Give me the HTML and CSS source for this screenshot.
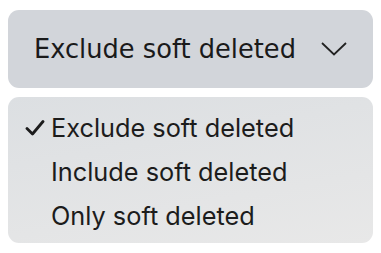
FILE: index.html
```html
<!DOCTYPE html>
<html lang="en">
<head>
    <meta charset="UTF-8">
    <title>Soft delete filter</title>
    <link rel="stylesheet" href="styles.css">
</head>
<body>
    <div class="select">
        <span class="select-label">Exclude soft deleted</span>
        <svg class="chevron" width="26" height="14" viewBox="0 0 26 14">
            <path d="M1 1 L13 12.5 L25 1" fill="none" stroke="#222" stroke-width="1.8"/>
        </svg>
    </div>
    <ul class="menu">
        <li class="menu-item">
            <svg class="check" width="20" height="16" viewBox="0 0 20 16">
                <path d="M2 8.5 L7.5 14 L18 1.5" fill="none" stroke="#1c1c1c" stroke-width="2.8" stroke-linecap="round" stroke-linejoin="round"/>
            </svg>
            Exclude soft deleted
        </li>
        <li class="menu-item"><span class="check"></span>Include soft deleted</li>
        <li class="menu-item"><span class="check"></span>Only soft deleted</li>
    </ul>
</body>
</html>
```

FILE: styles.css
```css
body {
    margin: 0;
    padding: 10px 8px 0 8px;
    background: #ffffff;
    width: 365px;
}

.select {
    display: flex;
    align-items: center;
    height: 78px;
    padding: 0 0 1px 26px;
    background: #d2d5da;
    border-radius: 11px;
    box-sizing: border-box;
    gap: 25px;
}

.select-label {
    font-family: "DejaVu Sans", sans-serif;
    font-size: 25.7px;
    color: #1a1a1a;
}

.chevron {
    display: block;
}

.menu {
    list-style: none;
    margin: 9px 0 0 0;
    padding: 8px 0 10px 0;
    background: linear-gradient(170deg, #dcdfe2, #e8e8e8);
    border-radius: 11px;
    height: 146px;
    box-sizing: border-box;
}

.menu-item {
    display: flex;
    align-items: center;
    height: 44px;
    font-family: "Inter", sans-serif;
    font-size: 25.3px;
    color: #1c1c1c;
}

.check {
    display: block;
    width: 20px;
    margin: 2px 6px 0 17px;
}
```
